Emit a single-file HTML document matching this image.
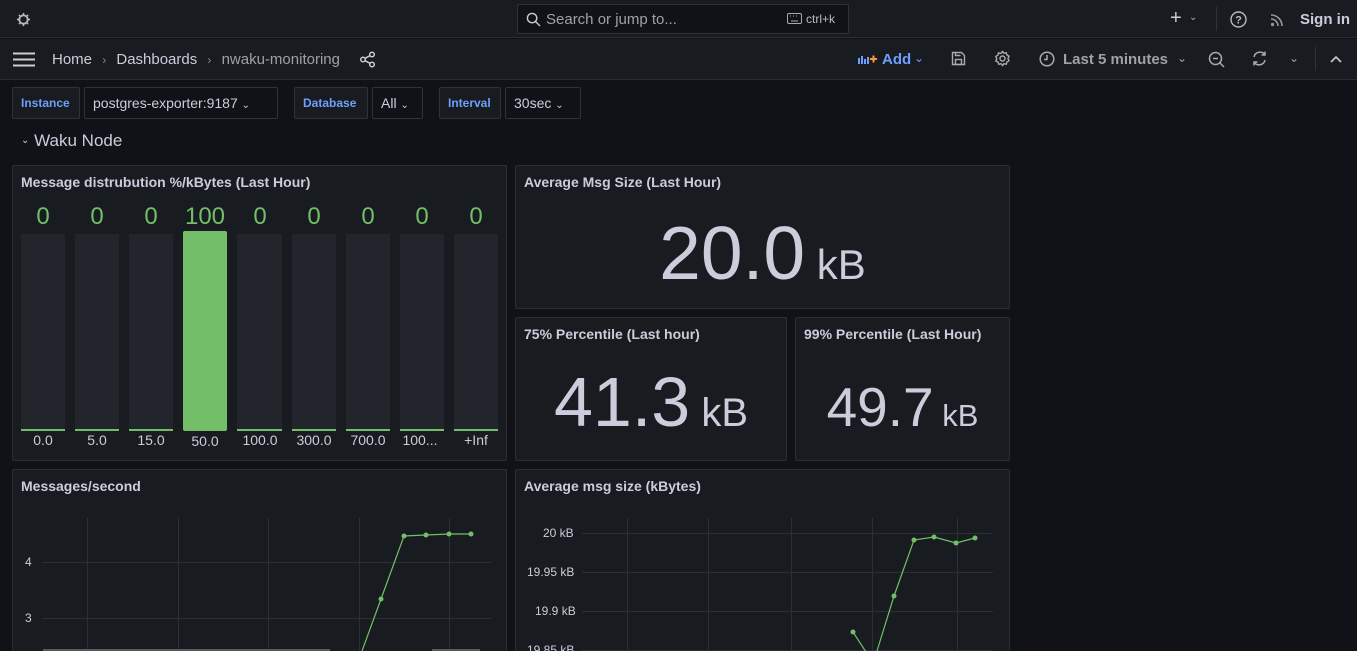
<!DOCTYPE html>
<html style="width:1357px;height:651px;overflow:hidden"><head><meta charset="utf-8"><style>
*{box-sizing:border-box;margin:0;padding:0}
body{width:1357px;height:651px;overflow:hidden;background:#111217;font-family:"Liberation Sans",sans-serif;color:#ccccdc;position:relative}
.a{position:absolute}
.panel{position:absolute;background:#181b1f;border:1px solid #2a2d33;border-radius:2px}
.pt{position:absolute;left:8px;top:8px;font-size:14px;font-weight:bold;color:#ccccdc;white-space:nowrap}
.var{position:absolute;top:87px;height:32px;border:1px solid #2f3238;border-radius:2px;font-size:14px;line-height:30px;padding:0 8px;white-space:nowrap}
.lbl{background:#181b1f;color:#6e9fff;font-size:12px;font-weight:bold}
.val{background:#111217;color:#ccccdc}
.bar{position:absolute;top:234px;width:44px;height:197px;background:#22252b;border-bottom:2px solid #73bf69}
.bv{position:absolute;top:203px;width:56px;text-align:center;font-size:24px;color:#73bf69}
.bl{position:absolute;top:432px;width:56px;text-align:center;font-size:14px;color:#ccccdc}
.big{position:absolute;color:#ccccdc;white-space:nowrap;text-align:center}
</style></head><body>
<!-- top bar -->
<div class="a" style="left:0;top:0;width:1357px;height:38px;background:#181b1f;border-bottom:1px solid #2a2d33"></div>
<svg class="a" style="left:16px;top:12px" width="15" height="15" viewBox="0 0 16 16"><circle cx="8" cy="8" r="4.5" fill="none" stroke="#bbb" stroke-width="2"/><g stroke="#bbb" stroke-width="1.5"><path d="M8 1v3M8 12v3M1 8h3M12 8h3M3 3l2 2M11 11l2 2M13 3l-2 2M3 13l2-2"/></g></svg>
<div class="a" style="left:517px;top:4px;width:332px;height:30px;background:#111217;border:1px solid #2f3238;border-radius:2px"></div>
<svg class="a" style="left:526px;top:12px" width="15" height="15" viewBox="0 0 16 16"><circle cx="6.5" cy="6.5" r="5" fill="none" stroke="#ccc" stroke-width="1.5"/><path d="M10 10l5 5" stroke="#ccc" stroke-width="1.5"/></svg>
<div class="a" style="left:546px;top:11px;font-size:15px;color:#9fa1a8">Search or jump to...</div>
<svg class="a" style="left:787px;top:13px" width="15" height="11" viewBox="0 0 15 11"><rect x=".5" y=".5" width="14" height="10" rx="1.5" fill="none" stroke="#aaa"/><path d="M3 3h1M6 3h1M9 3h1M12 3h0M4 8h7" stroke="#aaa"/></svg>
<div class="a" style="left:806px;top:12px;font-size:12px;color:#bbb">ctrl+k</div>
<div class="a" style="left:1170px;top:7px;font-size:20px;color:#ccc">+</div>
<div class="a" style="left:1189px;top:12px;font-size:10px;color:#aaa">⌄</div>
<div class="a" style="left:1216px;top:7px;width:1px;height:24px;background:#2f3238"></div>
<svg class="a" style="left:1230px;top:11px" width="17" height="17" viewBox="0 0 17 17"><circle cx="8.5" cy="8.5" r="7.5" fill="none" stroke="#bbb" stroke-width="1.4"/><text x="8.5" y="12.5" font-size="11" font-family="Liberation Sans" fill="#bbb" text-anchor="middle" font-weight="bold">?</text></svg>
<svg class="a" style="left:1270px;top:12px" width="15" height="15" viewBox="0 0 15 15"><circle cx="2.5" cy="12.5" r="1.6" fill="#999"/><path d="M1 7a7 7 0 0 1 7 7M1 3a11 11 0 0 1 11 11" fill="none" stroke="#999" stroke-width="1.6"/></svg>
<div class="a" style="left:1300px;top:11px;font-size:15px;font-weight:bold;color:#ccccdc">Sign in</div>
<!-- second bar -->
<div class="a" style="left:0;top:39px;width:1357px;height:41px;background:#181b1f;border-bottom:1px solid #2a2d33"></div>
<svg class="a" style="left:13px;top:52px" width="22" height="15"><path d="M0 1.5h22M0 7.5h22M0 13.5h22" stroke="#ccc" stroke-width="2"/></svg>
<div class="a" style="left:52px;top:51px;font-size:15px;color:#ccccdc">Home <span style="color:#888;font-size:12px;margin:0 6px">›</span> Dashboards <span style="color:#888;font-size:12px;margin:0 6px">›</span> <span style="color:#9fa1a8">nwaku-monitoring</span></div>
<svg class="a" style="left:359px;top:51px" width="17" height="17" viewBox="0 0 17 17" fill="none" stroke="#ccc" stroke-width="1.5"><circle cx="13" cy="3.5" r="2.3"/><circle cx="4" cy="8.5" r="2.3"/><circle cx="13" cy="13.5" r="2.3"/><path d="M6 7.3l5-2.6M6 9.7l5 2.6"/></svg>
<svg class="a" style="left:858px;top:53px" width="20" height="12"><path d="M1 5v6M4 3v8M7 6v5M10 4v7" stroke="#6e9fff" stroke-width="2"/><path d="M12 6h7M15.5 2.5v7" stroke="#ff9830" stroke-width="2"/></svg>
<div class="a" style="left:882px;top:51px;font-size:15px;font-weight:bold;color:#6e9fff">Add</div>
<div class="a" style="left:914px;top:51px;font-size:12px;color:#6e9fff">⌄</div>
<svg class="a" style="left:951px;top:51px" width="15" height="15" viewBox="0 0 15 15" fill="none" stroke="#aaa" stroke-width="1.4"><path d="M1.5 1.5h9l3 3v9h-12z"/><rect x="4.5" y="8.5" width="6" height="5"/><path d="M4.5 1.5v3h5"/></svg>
<svg class="a" style="left:994px;top:50px" width="17" height="17" viewBox="0 0 17 17" fill="none" stroke="#aaa" stroke-width="1.4"><circle cx="8.5" cy="8.5" r="2.5"/><path d="M8.5 1.5l1.5 1.8 2.3-.6.6 2.3 2.1 1.2-1 2.3 1 2.3-2.1 1.2-.6 2.3-2.3-.6-1.5 1.8-1.5-1.8-2.3.6-.6-2.3L1.8 11l1-2.3-1-2.3 2.1-1.2.6-2.3 2.3.6z"/></svg>
<svg class="a" style="left:1039px;top:51px" width="16" height="16" viewBox="0 0 16 16" fill="none" stroke="#aaa" stroke-width="1.5"><circle cx="8" cy="8" r="6.8"/><path d="M8 4v4.5H5"/></svg>
<div class="a" style="left:1063px;top:51px;font-size:15px;font-weight:bold;color:#9fa1a8">Last 5 minutes</div>
<div class="a" style="left:1177px;top:51px;font-size:12px;color:#9fa1a8">⌄</div>
<svg class="a" style="left:1208px;top:51px" width="17" height="17" viewBox="0 0 17 17" fill="none" stroke="#aaa" stroke-width="1.5"><circle cx="7.5" cy="7.5" r="6"/><path d="M12 12l4 4M5 7.5h5"/></svg>
<svg class="a" style="left:1251px;top:50px" width="17" height="17" viewBox="0 0 17 17" fill="none" stroke="#aaa" stroke-width="1.5"><path d="M3 7a6 6 0 0 1 11-2M14 10a6 6 0 0 1-11 2M14 1.5v3.5h-3.5M3 15.5v-3.5h3.5"/></svg>
<div class="a" style="left:1289px;top:51px;font-size:12px;color:#9fa1a8">⌄</div>
<div class="a" style="left:1315px;top:47px;width:1px;height:24px;background:#2f3238"></div>
<svg class="a" style="left:1330px;top:55px" width="12" height="8"><path d="M1 7l5-5 5 5" fill="none" stroke="#ccc" stroke-width="1.6"/></svg>
<!-- variables -->
<div class="var lbl" style="left:12px;width:68px">Instance</div>
<div class="var val" style="left:84px;width:194px">postgres-exporter:9187 <span style="font-size:10px">⌄</span></div>
<div class="var lbl" style="left:294px;width:74px">Database</div>
<div class="var val" style="left:372px;width:51px">All <span style="font-size:10px">⌄</span></div>
<div class="var lbl" style="left:439px;width:62px">Interval</div>
<div class="var val" style="left:505px;width:76px">30sec <span style="font-size:10px">⌄</span></div>
<div class="a" style="left:21px;top:131px;font-size:17px;color:#ccccdc"><span style="font-size:10px;vertical-align:3px">⌄</span> Waku Node</div>
<!-- panel 1 -->
<div class="panel" style="left:12px;top:165px;width:495px;height:296px"><div class="pt">Message distrubution %/kBytes (Last Hour)</div></div>
<div class="bar" style="left:21px"></div><div class="bv" style="left:15px">0</div><div class="bl" style="left:15px">0.0</div>
<div class="bar" style="left:75px"></div><div class="bv" style="left:69px">0</div><div class="bl" style="left:69px">5.0</div>
<div class="bar" style="left:129px"></div><div class="bv" style="left:123px">0</div><div class="bl" style="left:123px">15.0</div>
<div class="a" style="left:183px;top:231px;width:44px;height:200px;background:#73bf69;border-radius:2px"></div><div class="bv" style="left:177px">100</div><div class="bl" style="left:177px;top:433px">50.0</div>
<div class="bar" style="left:237px;width:45px"></div><div class="bv" style="left:232px">0</div><div class="bl" style="left:232px">100.0</div>
<div class="bar" style="left:292px"></div><div class="bv" style="left:286px">0</div><div class="bl" style="left:286px">300.0</div>
<div class="bar" style="left:346px"></div><div class="bv" style="left:340px">0</div><div class="bl" style="left:340px">700.0</div>
<div class="bar" style="left:400px"></div><div class="bv" style="left:394px">0</div><div class="bl" style="left:392px">100...</div>
<div class="bar" style="left:454px"></div><div class="bv" style="left:448px">0</div><div class="bl" style="left:448px">+Inf</div>
<!-- stat panels -->
<div class="panel" style="left:515px;top:165px;width:495px;height:144px"><div class="pt">Average Msg Size (Last Hour)</div></div>
<div class="big" style="left:515px;top:210px;width:495px;font-size:75px">20.0<span style="font-size:42px"> kB</span></div>
<div class="panel" style="left:515px;top:317px;width:272px;height:144px"><div class="pt">75% Percentile (Last hour)</div></div>
<div class="big" style="left:515px;top:362px;width:272px;font-size:70px">41.3<span style="font-size:40px"> kB</span></div>
<div class="panel" style="left:795px;top:317px;width:215px;height:144px"><div class="pt">99% Percentile (Last Hour)</div></div>
<div class="big" style="left:795px;top:375px;width:215px;font-size:55px">49.7<span style="font-size:31px"> kB</span></div>
<!-- graph panels -->
<div class="panel" style="left:12px;top:469px;width:495px;height:182px;border-bottom:none"><div class="pt">Messages/second</div></div>
<div class="panel" style="left:515px;top:469px;width:495px;height:182px;border-bottom:none"><div class="pt">Average msg size (kBytes)</div></div>
<svg class="a" style="left:0;top:0" width="1357" height="651">
<g stroke="#2c2f35" stroke-width="1">
<path d="M87.5 518V651M178.5 518V651M268.5 518V651M359.5 518V651M449.5 518V651M42 562.5H491M42 618.5H491"/>
<path d="M627.5 518V651M708.5 518V651M791.5 518V651M872.5 518V651M957.5 518V651M582 533.5H993M582 572.5H993M582 611.5H993M582 650.5H993"/>
</g>
<g font-family="Liberation Sans" font-size="12" fill="#ccccdc">
<text x="25" y="566">4</text><text x="25" y="622">3</text>
<text x="543" y="537">20 kB</text><text x="527" y="576">19.95 kB</text><text x="535" y="615">19.9 kB</text><text x="527" y="654">19.85 kB</text>
</g>
<g fill="none" stroke="#73bf69" stroke-width="1.2">
<path d="M362 651L381 599L404 536L426 535L449 534L471 534"/>
<path d="M853 632L866 652M877 651L894 596L914 540L934 537L956 543L975 538"/>
</g>
<g fill="#73bf69">
<circle cx="381" cy="599" r="2.5"/><circle cx="404" cy="536" r="2.5"/><circle cx="426" cy="535" r="2.5"/><circle cx="449" cy="534" r="2.5"/><circle cx="471" cy="534" r="2.5"/>
<circle cx="853" cy="632" r="2.5"/><circle cx="894" cy="596" r="2.5"/><circle cx="914" cy="540" r="2.5"/><circle cx="934" cy="537" r="2.5"/><circle cx="956" cy="543" r="2.5"/><circle cx="975" cy="538" r="2.5"/>
</g>
<path d="M43 650H330M432 650H480" stroke="#55585e" stroke-width="2"/>
</svg>
</body></html>
